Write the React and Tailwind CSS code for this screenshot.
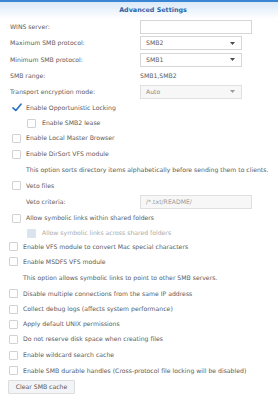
import React from "react";

const font = { fontFamily: '"DejaVu Sans", Verdana, sans-serif' };

function Box({ checked, disabled }) {
  if (checked) {
    return (
      <svg width="10" height="9" viewBox="0 0 10 9" className="shrink-0">
        <path d="M1 4.8 L3.8 7.5 L9 1.2" fill="none" stroke="#1f6fc4" strokeWidth="1.6" strokeLinecap="round" strokeLinejoin="round" />
      </svg>
    );
  }
  return (
    <div
      className={
        disabled
          ? "w-[9px] h-[9px] shrink-0 rounded-[1px] bg-[#dbe3ee] border border-[#dbe3ee]"
          : "w-[9px] h-[9px] shrink-0 rounded-[1px] bg-white border border-[#d2d2d2]"
      }
    />
  );
}

function Caret({ light }) {
  return (
    <svg width="5" height="3" viewBox="0 0 5 3" className="shrink-0">
      <path d="M0 0 H5 L2.5 3 Z" fill={light ? "#9a9a9a" : "#4a4a4a"} />
    </svg>
  );
}

export default function App() {
  return (
    <div className="w-[278px] h-[400px] bg-white overflow-hidden text-[6.15px] text-[#5a5a5a]" style={font}>
      <div className="h-[19px] border-t-2 border-[#3a86d4] bg-gradient-to-b from-[#dbe9f7] to-white flex items-center justify-center pl-[28px]">
        <span className="font-bold text-[#2a64a8] text-[6.4px]">Advanced Settings</span>
      </div>

      {/* form rows */}
      <div className="flex items-center h-[16px] pl-[10px]">
        <div className="w-[130px]">WINS server:</div>
        <div className="w-[112px] h-[14px] border border-[#d6d6d6] bg-white" />
      </div>
      <div className="flex items-center h-[16px] pl-[10px]">
        <div className="w-[130px]">Maximum SMB protocol:</div>
        <div className="w-[102px] h-[14px] border border-[#d6d6d6] bg-white flex items-center justify-between pl-[5px] pr-[6px]">
          <span>SMB2</span>
          <Caret />
        </div>
      </div>
      <div className="flex items-center h-[17px] pl-[10px]">
        <div className="w-[130px]">Minimum SMB protocol:</div>
        <div className="w-[102px] h-[14px] border border-[#d6d6d6] bg-white flex items-center justify-between pl-[5px] pr-[6px]">
          <span>SMB1</span>
          <Caret />
        </div>
      </div>
      <div className="flex items-center h-[16px] pl-[10px]">
        <div className="w-[130px]">SMB range:</div>
        <div>SMB1,SMB2</div>
      </div>
      <div className="flex items-center h-[15px] pl-[10px]">
        <div className="w-[130px]">Transport encryption mode:</div>
        <div className="w-[102px] h-[14px] border border-[#e0e0e0] bg-[#f7f7f7] flex items-center justify-between pl-[5px] pr-[6px] text-[#888]">
          <span>Auto</span>
          <Caret light />
        </div>
      </div>

      {/* checkbox section 1 */}
      <div className="flex items-center h-[17px] pl-[12px] gap-[4px]">
        <Box checked />
        <span>Enable Opportunistic Locking</span>
      </div>
      <div className="flex items-center h-[14px] pl-[27px] gap-[6px]">
        <Box />
        <span>Enable SMB2 lease</span>
      </div>
      <div className="flex items-center h-[16px] pl-[12px] gap-[5px]">
        <Box />
        <span>Enable Local Master Browser</span>
      </div>
      <div className="flex items-center h-[16px] pl-[12px] gap-[5px]">
        <Box />
        <span>Enable DirSort VFS module</span>
      </div>
      <div className="flex items-center h-[16px] pl-[26px] whitespace-nowrap">
        This option sorts directory items alphabetically before sending them to clients.
      </div>
      <div className="flex items-center h-[15px] pl-[12px] gap-[5px]">
        <Box />
        <span>Veto files</span>
      </div>
      <div className="flex items-center h-[17px] pl-[26px]">
        <div className="w-[114px]">Veto criteria:</div>
        <div className="w-[112px] h-[14px] border border-[#e0e0e0] bg-[#f7f7f7] flex items-center pl-[5px] text-[#999]">
          /*.txt/README/
        </div>
      </div>
      <div className="flex items-center h-[16px] pl-[12px] gap-[5px]">
        <Box />
        <span>Allow symbolic links within shared folders</span>
      </div>
      <div className="flex items-center h-[14px] pl-[27px] gap-[6px] text-[#aaa]">
        <Box disabled />
        <span>Allow symbolic links across shared folders</span>
      </div>

      {/* checkbox section 2 */}
      <div className="flex items-center h-[13px] pl-[9px] gap-[5px]">
        <Box />
        <span>Enable VFS module to convert Mac special characters</span>
      </div>
      <div className="flex items-center h-[17px] pl-[9px] gap-[5px]">
        <Box />
        <span>Enable MSDFS VFS module</span>
      </div>
      <div className="flex items-center h-[16px] pl-[23px]">
        This option allows symbolic links to point to other SMB servers.
      </div>
      <div className="flex items-center h-[15px] pl-[9px] gap-[5px]">
        <Box />
        <span>Disable multiple connections from the same IP address</span>
      </div>
      <div className="flex items-center h-[16px] pl-[9px] gap-[5px]">
        <Box />
        <span>Collect debug logs (affects system performance)</span>
      </div>
      <div className="flex items-center h-[14px] pl-[9px] gap-[5px]">
        <Box />
        <span>Apply default UNIX permissions</span>
      </div>
      <div className="flex items-center h-[16px] pl-[9px] gap-[5px]">
        <Box />
        <span>Do not reserve disk space when creating files</span>
      </div>
      <div className="flex items-center h-[16px] pl-[9px] gap-[5px]">
        <Box />
        <span>Enable wildcard search cache</span>
      </div>
      <div className="flex items-center h-[15px] pl-[9px] gap-[5px] whitespace-nowrap">
        <Box />
        <span>Enable SMB durable handles (Cross-protocol file locking will be disabled)</span>
      </div>

      <div className="pl-[8px] pt-[2px]">
        <div className="w-[67px] h-[14px] border border-[#dcdcdc] bg-[#f2f4f7] rounded-[1px] flex items-center justify-center text-[#555]">
          Clear SMB cache
        </div>
      </div>
    </div>
  );
}
